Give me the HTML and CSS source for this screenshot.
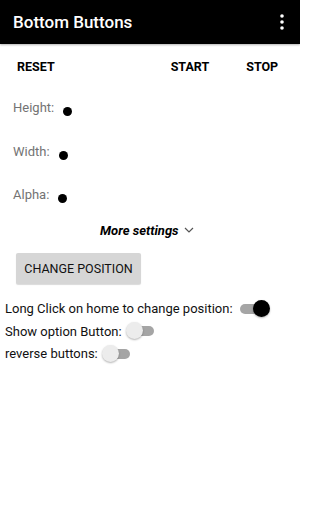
FILE: index.html
```html
<!DOCTYPE html>
<html>
<head>
<meta charset="utf-8">
<link rel="stylesheet" href="styles.css">
</head>
<body>
<header class="appbar">
  <span class="title">Bottom Buttons</span>
  <svg class="overflow" width="4" height="16" viewBox="0 0 4 16"><circle cx="2" cy="2" r="1.8" fill="#fff"/><circle cx="2" cy="8" r="1.8" fill="#fff"/><circle cx="2" cy="14" r="1.8" fill="#fff"/></svg>
</header>
<div class="actions">
  <span class="act reset">RESET</span>
  <span class="act start">START</span>
  <span class="act stop">STOP</span>
</div>
<div class="settings">
  <div class="srow r-height"><span class="lbl">Height:</span><span class="dot"></span></div>
  <div class="srow r-width"><span class="lbl">Width:</span><span class="dot"></span></div>
  <div class="srow r-alpha"><span class="lbl">Alpha:</span><span class="dot"></span></div>
</div>
<div class="more">
  <span class="more-text">More settings</span>
  <svg class="chev" width="10" height="6" viewBox="0 0 10 6"><path d="M1 1 L5 5 L9 1" fill="none" stroke="#555" stroke-width="1.2"/></svg>
</div>
<div class="btnwrap"><span class="change">CHANGE POSITION</span></div>
<div class="toggles">
  <div class="trow">Long Click on home to change position:<span class="sw on"><span class="thumb"></span></span></div>
  <div class="trow">Show option Button:<span class="sw off"><span class="thumb"></span></span></div>
  <div class="trow">reverse buttons:<span class="sw off"><span class="thumb"></span></span></div>
</div>
</body>
</html>
```
FILE: styles.css
```css
* { box-sizing: border-box; }
body {
  margin: 0;
  width: 300px;
  height: 512px;
  background: #fff;
  font-family: Roboto, "Liberation Sans", sans-serif;
  color: #000;
}
.appbar {
  height: 44px;
  background: #000;
  display: flex;
  align-items: center;
  justify-content: space-between;
  padding: 0 16px 0 13px;
  box-shadow: 0 1px 2px rgba(0,0,0,0.3);
}
.title {
  color: #fff;
  font-size: 17px;
  font-weight: 500;
}
.overflow { display: block; }
.actions {
  display: flex;
  align-items: center;
  height: 44px;
  font-size: 12.5px;
  font-weight: 700;
}
.act { display: block; }
.reset { margin-left: 17px; }
.start { margin-left: 116px; }
.stop { margin-left: 37px; }
.settings {
  display: flex;
  flex-direction: column;
  padding-left: 13px;
  margin-top: -2px;
}
.srow {
  display: flex;
  align-items: center;
  height: 43.5px;
  color: #737373;
  font-size: 13px;
}
.dot {
  width: 9px;
  height: 9px;
  border-radius: 50%;
  background: #000;
  margin-left: 9px;
  margin-top: 8px;
}
.more {
  display: flex;
  align-items: center;
  margin-left: 100px;
  height: 20px;
  margin-top: 4px;
}
.more-text {
  font-size: 13px;
  font-weight: 700;
  font-style: italic;
}
.chev { margin-left: 5px; margin-top: -2px; }
.btnwrap {
  padding-left: 16px;
  margin-top: 12px;
}
.change {
  display: inline-flex;
  align-items: center;
  justify-content: center;
  width: 125px;
  height: 31px;
  background: #d6d6d6;
  border-radius: 2px;
  font-size: 12.5px;
  color: #111;
  box-shadow: 0 1px 1px rgba(0,0,0,0.15);
}
.toggles {
  padding-left: 5px;
  margin-top: 14px;
  font-size: 13px;
  color: #111;
}
.trow {
  display: flex;
  align-items: center;
  height: 22.5px;
}
.sw {
  position: relative;
  display: inline-block;
  width: 23px;
  height: 10px;
  border-radius: 5px;
  background: #a5a5a5;
}
.thumb {
  position: absolute;
  top: -4px;
  width: 17px;
  height: 17px;
  border-radius: 50%;
  box-shadow: 0 1px 2px rgba(0,0,0,0.3);
}
.sw.on { margin-left: 7px; }
.sw.on .thumb { left: 13px; background: #000; }
.sw.off { margin-left: 9px; }
.sw.off .thumb { left: -5px; background: #ececec; }
```
